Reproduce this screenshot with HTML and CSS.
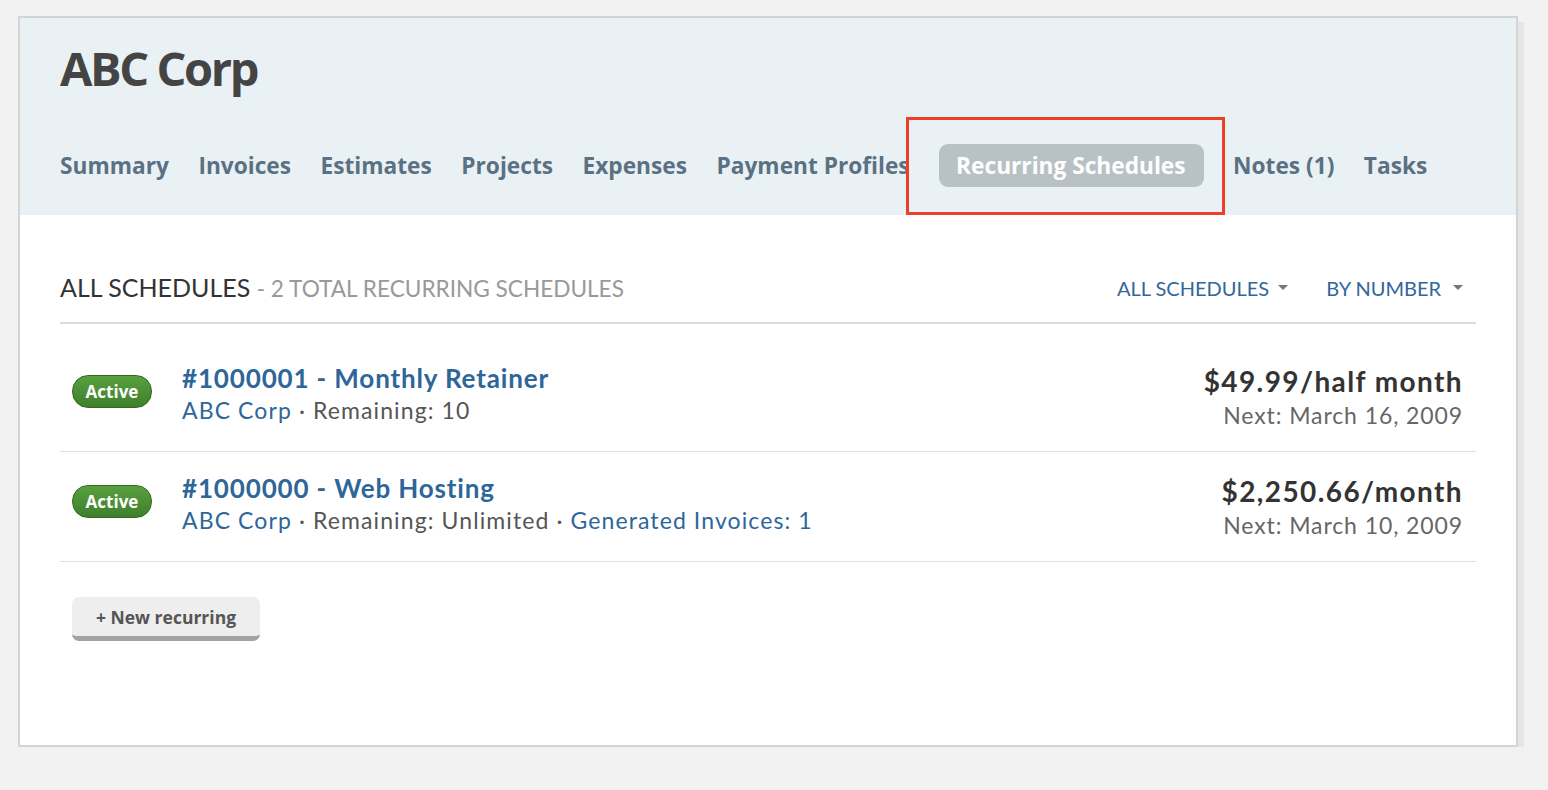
FILE: index.html
```html
<!DOCTYPE html>
<html>
<head>
<meta charset="utf-8">
<link rel="stylesheet" href="styles.css">
</head>
<body>
<div class="panel">
  <header class="header">
    <h1 class="title">ABC Corp</h1>
    <nav class="tabs">
      <a class="tab">Summary</a>
      <a class="tab">Invoices</a>
      <a class="tab">Estimates</a>
      <a class="tab">Projects</a>
      <a class="tab">Expenses</a>
      <a class="tab">Payment Profiles</a>
      <a class="tab active">Recurring Schedules<span class="highlight"></span></a>
      <a class="tab">Notes (1)</a>
      <a class="tab">Tasks</a>
    </nav>
  </header>
  <main class="content">
    <div class="list-head">
      <div class="list-title">ALL SCHEDULES <span class="muted">- 2 TOTAL RECURRING SCHEDULES</span></div>
      <div class="filters">
        <a class="filter">ALL SCHEDULES <span class="caret"></span></a>
        <a class="filter wide">BY NUMBER <span class="caret"></span></a>
      </div>
    </div>
    <div class="rows">
      <div class="row">
        <span class="badge">Active</span>
        <div class="info">
          <a class="row-title">#1000001 - Monthly Retainer</a>
          <div class="sub"><a class="link">ABC Corp</a> · Remaining: 10</div>
        </div>
        <div class="amount">
          <div class="price">$49.99/half month</div>
          <div class="next">Next: March 16, 2009</div>
        </div>
      </div>
      <div class="row">
        <span class="badge">Active</span>
        <div class="info">
          <a class="row-title">#1000000 - Web Hosting</a>
          <div class="sub"><a class="link">ABC Corp</a> · Remaining: Unlimited · <a class="link">Generated Invoices: 1</a></div>
        </div>
        <div class="amount">
          <div class="price">$2,250.66/month</div>
          <div class="next">Next: March 10, 2009</div>
        </div>
      </div>
    </div>
    <button class="new-btn">+ New recurring</button>
  </main>
</div>
</body>
</html>
```
FILE: styles.css
```css
html, body {
  margin: 0;
  padding: 0;
  background: #f2f2f2;
}
body {
  padding: 16px 0 0 18px;
  font-family: Lato, "Open Sans", sans-serif;
}
.panel {
  width: 1496px;
  height: 727px;
  border: 2px solid #d4d4d4;
  background: #fff;
  box-shadow: 6px 6px 0 #e5e5e5;
  box-sizing: content-box;
}
.header {
  background: #eaf1f5;
  height: 197px;
  padding: 0 40px;
  box-sizing: border-box;
  display: flex;
  flex-direction: column;
}
.title {
  margin: 0;
  padding-top: 21px;
  font-family: "Open Sans", sans-serif;
  font-weight: 700;
  font-size: 47px;
  letter-spacing: -2.4px;
  line-height: 58px;
  color: #444;
}
.tabs {
  display: flex;
  align-items: center;
  gap: 29.5px;
  margin-top: 47px;
}
.tab {
  font-family: "Open Sans", sans-serif;
  font-weight: 700;
  font-size: 22.7px;
  color: #5a7183;
  line-height: 43px;
  white-space: nowrap;
}
.tab.active {
  position: relative;
  background: #b8c2c4;
  color: #fff;
  border-radius: 9px;
  padding: 0 18px 0 17px;
}
.highlight {
  position: absolute;
  left: -33px;
  right: -21px;
  top: -27px;
  bottom: -28px;
  border: 3px solid #ec4026;
}
.content {
  padding: 0 40px;
}
.list-head {
  display: flex;
  justify-content: space-between;
  align-items: center;
  height: 109px;
  padding-top: 36px;
  box-sizing: border-box;
  border-bottom: 2px solid #dcdcdc;
}
.list-title {
  font-size: 25px;
  color: #333;
}
.muted {
  color: #999;
  font-size: 22.6px;
}
.filters {
  display: flex;
  gap: 38px;
  padding-right: 13px;
  padding-top: 2px;
}
.filter {
  font-size: 20px;
  color: #336699;
  display: flex;
  align-items: center;
  gap: 9px;
}
.filter.wide {
  gap: 12px;
}
.caret {
  width: 0;
  height: 0;
  border-left: 5.5px solid transparent;
  border-right: 5.5px solid transparent;
  border-top: 5px solid #777;
}
.rows {
  padding-top: 18px;
}
.row {
  display: flex;
  align-items: flex-start;
  height: 109px;
  padding: 0 13px 0 12px;
  border-bottom: 1px solid #e0e0e0;
}
.badge {
  width: 80px;
  height: 33px;
  margin-top: 33px;
  box-sizing: border-box;
  border-radius: 16px;
  background: linear-gradient(#58a03e, #3f7f2c);
  border: 1px solid #2f6a20;
  color: #fff;
  font-family: "Open Sans", sans-serif;
  font-weight: 700;
  font-size: 17px;
  display: flex;
  align-items: center;
  justify-content: center;
}
.info {
  margin-left: 30px;
  padding-top: 20px;
  flex: 1;
  display: flex;
  flex-direction: column;
}
.row-title {
  font-weight: 700;
  font-size: 26px;
  letter-spacing: 0.85px;
  color: #2e6699;
  line-height: 32px;
}
.sub {
  font-size: 23px;
  letter-spacing: 1.1px;
  color: #555;
  line-height: 33px;
}
.link {
  color: #2e6699;
}
.amount {
  text-align: right;
  padding-top: 22px;
}
.price {
  font-weight: 700;
  font-size: 28px;
  letter-spacing: 1.4px;
  color: #333;
  line-height: 34px;
}
.next {
  font-size: 23px;
  letter-spacing: 0.9px;
  color: #666;
  line-height: 34px;
}
.new-btn {
  margin: 35px 0 0 12px;
  width: 188px;
  height: 44px;
  box-sizing: border-box;
  background: #eee;
  border: none;
  border-bottom: 5px solid #a3a3a3;
  border-radius: 7px;
  font-family: "Open Sans", sans-serif;
  font-weight: 700;
  font-size: 17.5px;
  color: #555;
  padding: 0;
}
```
